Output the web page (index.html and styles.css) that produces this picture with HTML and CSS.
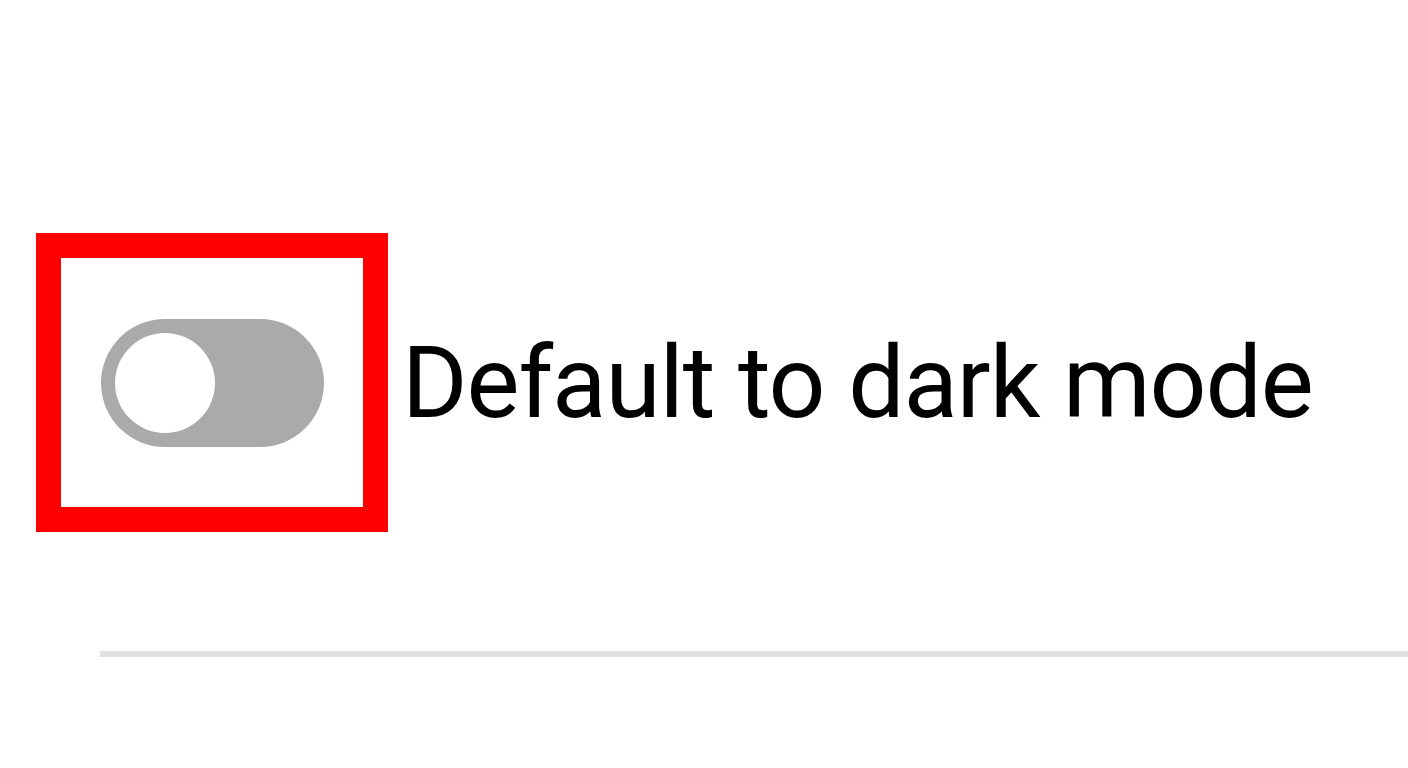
FILE: index.html
```html
<!DOCTYPE html>
<html lang="en">
<head>
    <meta charset="UTF-8">
    <meta name="viewport" content="width=device-width, initial-scale=1.0">
    <title>Settings</title>
    <link rel="stylesheet" href="styles.css">
</head>
<body>

<div class="settings">
    <div class="setting-row">
        <div class="highlight">
            <label class="switch">
                <input type="checkbox" id="darkMode">
                <span class="track"><span class="knob"></span></span>
            </label>
        </div>
        <label for="darkMode" class="setting-label">Default to dark mode</label>
    </div>
    <div class="divider"></div>
</div>

</body>
</html>
```

FILE: styles.css
```css
body {
    font-family: Roboto, "Liberation Sans", sans-serif;
    background-color: #FFFFFF;
    margin: 0;
}
.settings {
    padding-top: 233px;
}
.setting-row {
    display: flex;
    align-items: center;
    padding-left: 36px;
}
.highlight {
    border: 25px solid #FF0000; /* red marker round the switch */
    width: 302px;
    height: 249px;
    box-sizing: content-box;
    display: flex;
    align-items: center;
    justify-content: center;
}
.switch input {
    display: none;
}
.track {
    display: flex;
    align-items: center;
    width: 223px;
    height: 128px;
    padding: 0 14px;
    box-sizing: border-box;
    border-radius: 64px;
    background-color: #AAAAAA;
}
.knob {
    width: 100px;
    height: 100px;
    border-radius: 50%;
    background-color: #FFFFFF;
}
.setting-label {
    margin-left: 14px;
    font-size: 100px;
    letter-spacing: -1.1px;
    color: #000000;
}
.divider {
    height: 6px;
    margin-top: 119px;
    margin-left: 100px;
    background-color: #E0E0E0;
}
```
